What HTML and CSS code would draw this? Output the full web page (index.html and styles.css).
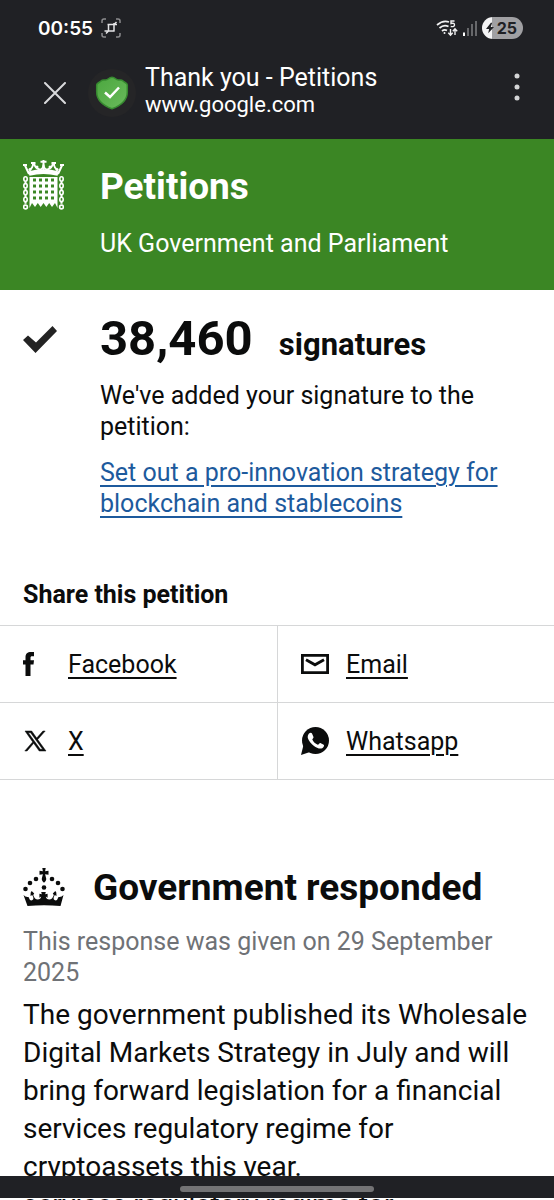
FILE: index.html
```html
<!DOCTYPE html>
<html lang="en">
<head>
    <meta charset="utf-8">
    <meta name="viewport" content="width=device-width, initial-scale=1">
    <title>Thank you - Petitions</title>
    <link rel="stylesheet" href="styles.css">
</head>
<body>
    <div class="status-bar">
        <span class="clock">00:55</span>
        <svg class="capture-icon" width="20" height="20" viewBox="0 0 20 20" fill="none" stroke="#e4e4e6" stroke-width="1.500">
            <path stroke="#8c8c8f" d="M1 5V3q0-2 2-2h2M15 1h2q2 0 2 2v2M19 15v2q0 2-2 2h-2M5 19H3q-2 0-2-2v-2"/>
            <path d="M7.500 6.500v7M3.500 13h10M6.500 6.500h9.500M13 5v8.500M13 6.500l2.500-2.500M7.500 13L5 15.500"/>
        </svg>
        <div class="status-right">
            <svg width="22" height="18" viewBox="0 0 22 18" fill="none" stroke="#f1f1f2" stroke-width="1.700">
                <path d="M1 6Q7 .8 13 3M3.500 9Q8 5 12.500 7.500M6 12Q8.500 9.800 11 11.500"/>
                <path stroke-width="1.400" d="M18.500 2h-3.500v2.500q3.500-.8 3.500 1.500q0 2-3.800 1.500"/>
                <path stroke-width="1.400" d="M14.500 10v6M12.300 13.800l2.200 2.400 2.200-2.400M19 16v-6M16.800 12.200L19 9.800l2.200 2.400"/>
                <circle cx="8.500" cy="14" r="1" fill="#f1f1f2" stroke="none"/>
            </svg>
            <svg width="14" height="16" viewBox="0 0 14 16">
                <path fill="#fff" d="M0 12.500h2V16H0z"/>
                <path fill="#67686b" d="M4 8h2v8H4zM8 4h2v12H8zM12 1h2v15h-2z"/>
            </svg>
            <span class="battery">
                <svg width="8" height="12" viewBox="0 0 9 12"><path fill="#202125" d="M5.500 0L0 7h3.500L2.500 12 9 5H5.300L7 0z"/></svg>
                25
            </span>
        </div>
    </div>

    <div class="toolbar">
        <button class="icon-button" aria-label="Close">
            <svg width="22" height="22" viewBox="0 0 22 22" stroke="#d9dadc" stroke-width="2" stroke-linecap="round">
                <path d="M1 1l20 20M21 1L1 21"/>
            </svg>
        </button>
        <svg class="site-icon" width="48" height="48" viewBox="0 0 48 48">
            <defs>
                <linearGradient id="shield" x1="0" y1="0" x2="1" y2="1">
                    <stop offset="0" stop-color="#4ca73f"/>
                    <stop offset="1" stop-color="#6abb5c"/>
                </linearGradient>
            </defs>
            <circle cx="24" cy="24" r="24" fill="#252527"/>
            <path fill="url(#shield)" stroke="#378a30" stroke-width="1.500" d="M24 8.300c-3.500 0-3.500 2.700-6.500 2.700-2 0-3.200-.5-4.500 1-1.500 1.800-4.300 1.500-4.300 4V23c0 9 6.300 13.500 15.300 16.800C33 36.500 39.300 32 39.300 23v-7c0-2.500-2.800-2.200-4.300-4-1.300-1.500-2.500-1-4.500-1-3 0-3-2.700-6.500-2.700z"/>
            <path fill="none" stroke="#fff" stroke-width="2.500" d="M17 23.500l5 4.500 9-9.500"/>
        </svg>
        <div class="page-info">
            <div class="page-title">Thank you - Petitions</div>
            <div class="page-url">www.google.com</div>
        </div>
        <button class="icon-button menu-button" aria-label="Menu">
            <svg width="6" height="28" viewBox="0 0 6 28" fill="#d4d5d7">
                <circle cx="3" cy="3" r="2.500"/><circle cx="3" cy="14" r="2.500"/><circle cx="3" cy="25" r="2.500"/>
            </svg>
        </button>
    </div>

    <div class="page">
        <header class="site-header">
            <svg class="portcullis" width="41" height="50" viewBox="0 0 41 50">
                <!-- crown -->
                <g fill="none" stroke="#fff">
                    <path stroke-width="2" d="M6 14L2 5.500M35 14L39 5.500"/>
                    <path stroke-width="1.800" d="M10 3.500q0 5-4 6.500M11 3q1 5.500 5.500 6.500 3.500 0 4-5 .5 5 4 5 4.500-1 5.500-6.500M31 3.500q0 5 4 6.500"/>
                    <path stroke-width="2" d="M20.500 0v10M17.500 1.800h6M0 5h4M37 5h4M8 3h4.500M28.500 3H33"/>
                </g>
                <g fill="#fff">
                    <circle cx="7" cy="9.500" r="1.500"/><circle cx="14" cy="7" r="1.500"/><circle cx="27" cy="7" r="1.500"/><circle cx="34" cy="9.500" r="1.500"/>
                    <path d="M5 11.500Q20.500 7 36 11.500l-1.500 4.300Q20.500 12 6.500 15.800z"/>
                </g>
                <!-- grille -->
                <path fill="#fff" fill-rule="evenodd" d="M6.500 17H34.500V48L32 43 29 47 26.200 43 23.300 47 20.500 43 17.700 47 14.800 43 12 47 9 43 6.500 48z
                    M10 18.500v3h3v-3zM16 18.500v3h3v-3zM22 18.500v3h3v-3zM28 18.500v3h3v-3z
                    M10 24.500v3h3v-3zM16 24.500v3h3v-3zM22 24.500v3h3v-3zM28 24.500v3h3v-3z
                    M10 30.500v3h3v-3zM16 30.500v3h3v-3zM22 30.500v3h3v-3zM28 30.500v3h3v-3z
                    M10 36.500v3h3v-3zM16 36.500v3h3v-3zM22 36.500v3h3v-3zM28 36.500v3h3v-3z"/>
                <!-- chains -->
                <g fill="none" stroke="#fff" stroke-width="1.600">
                    <path stroke-dasharray="2 4.800" stroke-width="2" d="M2.500 21.400V48M38.500 21.400V48"/>
                    <ellipse cx="2.500" cy="19" rx="1.700" ry="2.200"/><ellipse cx="2.500" cy="25.800" rx="1.700" ry="2.200"/><ellipse cx="2.500" cy="32.600" rx="1.700" ry="2.200"/><ellipse cx="2.500" cy="39.400" rx="1.700" ry="2.200"/><circle cx="2.500" cy="47" r="1.900"/>
                    <ellipse cx="38.500" cy="19" rx="1.700" ry="2.200"/><ellipse cx="38.500" cy="25.800" rx="1.700" ry="2.200"/><ellipse cx="38.500" cy="32.600" rx="1.700" ry="2.200"/><ellipse cx="38.500" cy="39.400" rx="1.700" ry="2.200"/><circle cx="38.500" cy="47" r="1.900"/>
                </g>
            </svg>
            <div>
                <h1>Petitions</h1>
                <p class="tagline">UK Government and Parliament</p>
            </div>
        </header>

        <section class="signed">
            <svg class="tick" width="34" height="27" viewBox="0 0 34 27"><path fill="#232323" d="M0 14l5-4.500 8 7L29.500 0 34 5 12.500 27z"/></svg>
            <div>
                <p class="count"><span class="number">38,460</span> <span class="unit">signatures</span></p>
                <p class="added">We've added your signature to the petition:</p>
                <p><a class="petition-link" href="#">Set out a pro-innovation strategy for blockchain and stablecoins</a></p>
            </div>
        </section>

        <section class="share">
            <h2>Share this petition</h2>
            <ul class="share-list">
                <li>
                    <svg width="28" height="28" viewBox="0 0 28 28"><path fill="#0b0c0c" d="M2.500 26V14.500H0v-4.300h2.500V7.500C2.500 3.500 4.500 2 8 2h3v4.300H9C7.800 6.300 7.500 6.800 7.500 8v2.200H11l-.5 4.300h-3V26z"/></svg>
                    <a href="#">Facebook</a>
                </li>
                <li>
                    <svg width="28" height="28" viewBox="0 0 28 28"><path fill="#0b0c0c" fill-rule="evenodd" d="M0 4h28v20H0zM2.800 6.800v14.400h22.400V6.800z"/><path fill="none" stroke="#0b0c0c" stroke-width="2.800" d="M5 9.800l9 5 9-5"/></svg>
                    <a href="#">Email</a>
                </li>
                <li>
                    <svg width="28" height="28" viewBox="0 0 28 28"><path fill="#0b0c0c" stroke="#0b0c0c" stroke-width=".5" fill-rule="evenodd" d="M2 4h6.700l5 7.100L19.900 4h2.300l-7.500 8.600L23 24h-6.800l-5.500-7.700L4.100 24H1.800l7.900-9.100zM5.300 5.700l12 16.600h2.300L7.600 5.700z"/></svg>
                    <a href="#">X</a>
                </li>
                <li>
                    <svg width="28" height="28" viewBox="0 0 28 28"><circle cx="14.500" cy="13.500" r="13.500" fill="#0b0c0c"/><path fill="#0b0c0c" d="M2.500 18L0 28l9-3z"/><path fill="#fff" d="M8 6.500c1-1 2.500-1 3 0l1.500 3.400c.3.800-1.200 2-1.200 2.600 1.200 2.500 3 4.200 5.500 5.200.8.200 1.800-2 2.600-1.700l3.300 1.700c1 .6-.2 2.800-1.500 3.500-2.200 1.100-5.700-.2-8.200-2.200-2.700-2.200-5.500-5.300-6.200-8-.3-1.700.2-3.500 1.200-4.500z"/></svg>
                    <a href="#">Whatsapp</a>
                </li>
            </ul>
        </section>

        <section class="response">
            <h2>
                <svg width="42" height="40" viewBox="0 0 42 40" fill="#0b0c0c">
                    <path d="M19.300 0h3.400l-.6 3.300L25.500 2.800v4l-3.400-.6.900 3.500q1 2.500-2 5-3-2.500-2-5l.9-3.500-3.400.6v-4l3.400.5z"/>
                    <circle cx="13" cy="11" r="2.300"/><circle cx="7" cy="15" r="2.300"/><circle cx="2.500" cy="21" r="2.300"/>
                    <circle cx="29" cy="11" r="2.300"/><circle cx="35" cy="15" r="2.300"/><circle cx="39.500" cy="21" r="2.300"/>
                    <circle cx="21" cy="19.500" r="2.300"/>
                    <path d="M4.500 38L.5 27q2 2.500 5 2 1.500 4.500 4 3 2-1.500-.3-5l-1.700 1 .2-3.500 1-1.500 2.500 2.500-1 1.500q1.500 4.500 4.500 4.500 3-.2 3.500-3l-1.800 1.200v-4l2.400.6-.6-2.300h4.600l-.6 2.300 2.400-.6v4l-1.800-1.200q.5 2.800 3.500 3 3 0 4.500-4.500l-1-1.500 2.500-2.500 1 1.500.2 3.500-1.700-1q-2.300 3.500-.3 5 2.500 1.500 4-3 3 .5 5-2L37.500 38Q21 36.500 4.500 38z"/>
                </svg>
                Government responded
            </h2>
            <p class="response-date">This response was given on 29 September 2025</p>
            <p class="response-text">The government published its Wholesale Digital Markets Strategy in July and will bring forward legislation for a financial services regulatory regime for cryptoassets this year.</p>
        </section>
    </div>

    <div class="gesture-bar"><span></span></div>
    <div class="overflow-line">services regulatory regime for</div>
</body>
</html>
```
FILE: styles.css
```css
* {
    margin: 0;
    padding: 0;
    box-sizing: border-box;
}

body {
    display: flex;
    flex-direction: column;
    height: 100vh;
    overflow: hidden;
    background-color: #fff;
    color: #0b0c0c;
    font-family: Roboto, "Liberation Sans", sans-serif;
    font-size: 25px;
    line-height: 31px;
}

svg {
    flex-shrink: 0;
}

/* Phone and browser bars */
.status-bar, .toolbar {
    display: flex;
    flex-shrink: 0;
    align-items: center;
    background-color: #202125;
    color: #fff;
}

.status-bar {
    gap: 8px;
    height: 56px;
    padding: 0 31px 0 38px;
    font-family: Inter, "Liberation Sans", sans-serif;
    font-size: 19px;
    font-weight: 600;
}

.status-right {
    display: flex;
    align-items: center;
    gap: 5px;
    margin-left: auto;
}

.battery {
    display: flex;
    align-items: center;
    gap: 3px;
    height: 22px;
    padding: 0 6px 0 4px;
    border-radius: 11px;
    background: linear-gradient(to right, #f4f4f5 10px, #a0a0a3 10px);
    color: #202125;
    font-size: 16px;
    font-weight: 700;
}

.toolbar {
    height: 83px;
    padding: 0 34px 10px 44px;
}

.icon-button {
    display: flex;
    border: none;
    background: none;
    cursor: pointer;
}

.site-icon {
    margin: 0 9px 0 22px;
}

.page-info {
    padding-bottom: 4px;
}

.page-title {
    font-size: 25px;
    line-height: 28px;
}

.page-url {
    font-size: 22px;
    line-height: 26px;
}

.menu-button {
    margin-left: auto;
    padding-bottom: 12px;
}

/* Petition page */
.page {
    flex: 1;
    min-height: 0;
    overflow: hidden;
}

.site-header {
    display: flex;
    gap: 36px;
    padding: 21px 23px 31px;
    background-color: #3b8624;
    color: #fff;
}

h1 {
    margin: 5px 0 19px;
    font-size: 37px;
    line-height: 44px;
}

.signed {
    display: flex;
    gap: 43px;
    padding: 20px 23px 0;
}

.tick {
    margin-top: 16px;
}

.count {
    margin-bottom: 4px;
    font-weight: 700;
    line-height: 58px;
}

.number {
    margin-right: 20px;
    font-size: 49px;
}

.unit {
    font-size: 31px;
}

.added {
    margin-bottom: 15px;
}

.petition-link {
    color: #1d5a9d;
    text-decoration-thickness: 2px;
    text-underline-offset: 4px;
}

.share {
    margin-top: 60px;
}

.share h2 {
    padding: 0 23px 15px;
    font-size: 25px;
}

.share-list {
    display: grid;
    grid-template-columns: 1fr 1fr;
    border-top: 1px solid #d6d7d8;
    list-style: none;
}

.share-list li {
    display: flex;
    align-items: center;
    gap: 17px;
    height: 77px;
    padding-left: 23px;
    border-bottom: 1px solid #d6d7d8;
}

.share-list li:nth-child(even) {
    border-left: 1px solid #d6d7d8;
}

.share-list a {
    color: #0b0c0c;
    text-decoration-thickness: 2px;
    text-underline-offset: 4px;
}

.response {
    padding: 86px 23px 0;
}

.response h2 {
    display: flex;
    align-items: center;
    gap: 28px;
    margin-bottom: 16px;
    font-size: 37px;
    line-height: 44px;
}

.response-date {
    margin-bottom: 8px;
    color: #6f7276;
}

.response-text {
    font-size: 28px;
    line-height: 38px;
}

/* Bottom of the screen */
.gesture-bar {
    display: flex;
    flex-shrink: 0;
    justify-content: center;
    align-items: center;
    height: 22px;
    padding-top: 4px;
    background-color: #202125;
}

.gesture-bar span {
    width: 35%;
    height: 6px;
    border-radius: 3px;
    background-color: #737375;
}

.overflow-line {
    flex-shrink: 0;
    height: 2px;
    padding-left: 23px;
    overflow: hidden;
    font-size: 28px;
    line-height: 14px;
}
```
